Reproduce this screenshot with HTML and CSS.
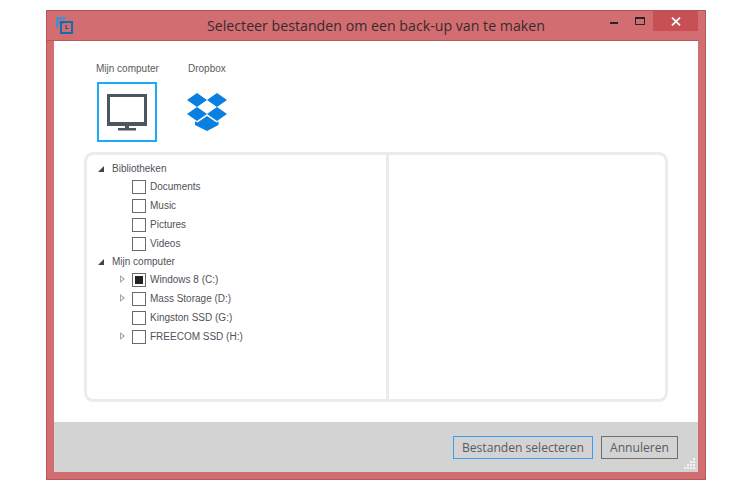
FILE: index.html
```html
<!DOCTYPE html>
<html lang="nl">
<head>
<meta charset="utf-8">
<title>Selecteer bestanden</title>
<link rel="stylesheet" href="styles.css">
</head>
<body>
<div class="window">
  <header class="titlebar">
    <svg class="app-icon" width="17" height="17" viewBox="0 0 17 17">
      <path d="M1 11V1h9" fill="none" stroke="#1b9ce0" stroke-width="1.4"/>
      <path d="M1 1h7v2H3v7H1z" fill="#1b9ce0" opacity=".5"/>
      <rect x="5" y="5" width="11" height="11" fill="none" stroke="#0d6fb0" stroke-width="2"/>
      <path d="M10 8v3.5h2.5" fill="none" stroke="#0d5f98" stroke-width="1.2"/>
      <path d="M3.500 5.500h4" stroke="#0d6fb0" stroke-width="2"/>
    </svg>
    <h1 class="title">Selecteer bestanden om een back-up van te maken</h1>
    <div class="controls">
      <span class="ctl ctl-min"><i class="min-bar"></i></span>
      <span class="ctl ctl-max"><i class="max-box"></i></span>
      <span class="ctl ctl-close">
        <svg width="10" height="9" viewBox="0 0 10 9"><path d="M1 .7l8 7.600M9 .7l-8 7.600" stroke="#fff" stroke-width="1.800" fill="none"/></svg>
      </span>
    </div>
  </header>
  <div class="client">
    <main class="content">
      <div class="sources">
        <div class="source">
          <div class="source-label">Mijn computer</div>
          <div class="tile tile-active">
            <svg width="40" height="37" viewBox="0 0 40 37">
              <rect x="1.500" y="1.500" width="37" height="29" fill="#fff" stroke="#4a5662" stroke-width="3"/>
              <path d="M0 28h40v3H0z" fill="#4a5662"/>
              <path d="M18 31h4v4h-4zM11 34h18v2.500H11z" fill="#4a5662"/>
            </svg>
          </div>
        </div>
        <div class="source">
          <div class="source-label">Dropbox</div>
          <div class="tile tile-plain">
            <svg width="40" height="38" viewBox="1 0 40 38">
              <path d="M11 0l10 7-10 7L1 7zM31 0l10 7-10 7-10-7zM11 14l10 7-10 7-10-7zM31 14l10 7-10 7-10-7z" fill="#0b7fe0"/>
              <path d="M21 23l9.500 6.500 2-1.200V32L21 38 9 32v-3.700l2.500 1.200z" fill="#0b7fe0"/>
            </svg>
          </div>
        </div>
      </div>
      <div class="panes">
        <div class="tree">
          <div class="row row-head"><i class="arrow-open"></i><span>Bibliotheken</span></div>
          <div class="row row-item"><i class="exp"></i><i class="check"></i><span>Documents</span></div>
          <div class="row row-item"><i class="exp"></i><i class="check"></i><span>Music</span></div>
          <div class="row row-item"><i class="exp"></i><i class="check"></i><span>Pictures</span></div>
          <div class="row row-item"><i class="exp"></i><i class="check"></i><span>Videos</span></div>
          <div class="row row-head"><i class="arrow-open"></i><span>Mijn computer</span></div>
          <div class="row row-item"><i class="exp exp-closed"></i><i class="check check-partial"></i><span>Windows 8 (C:)</span></div>
          <div class="row row-item"><i class="exp exp-closed"></i><i class="check"></i><span>Mass Storage (D:)</span></div>
          <div class="row row-item"><i class="exp"></i><i class="check"></i><span>Kingston SSD (G:)</span></div>
          <div class="row row-item"><i class="exp exp-closed"></i><i class="check"></i><span>FREECOM SSD (H:)</span></div>
        </div>
        <div class="detail"></div>
      </div>
    </main>
    <footer class="footer">
      <button class="btn btn-primary" type="button">Bestanden selecteren</button>
      <button class="btn" type="button">Annuleren</button>
      <svg class="grip" width="14" height="14" viewBox="0 0 14 14">
        <path d="M10 1h2v2h-2zM10 4h2v2h-2zM7 4h2v2H7zM10 7h2v2h-2zM7 7h2v2H7zM4 7h2v2H4zM10 10h2v2h-2zM7 10h2v2H7zM4 10h2v2H4zM1 10h2v2H1z" fill="#f4f4f4"/>
      </svg>
    </footer>
  </div>
</div>
</body>
</html>
```
FILE: styles.css
```css
* { box-sizing: border-box; }
html, body { margin: 0; height: 100%; background: #fff; overflow: hidden; }
body { padding: 10px 0 0 46px; font-family: "Liberation Sans", Arial, sans-serif; }

.window {
  width: 660px;
  height: 470px;
  background: #d26d72;
  border: 1px solid #b2575c;
  display: flex;
  flex-direction: column;
}

.titlebar {
  height: 30px;
  display: flex;
  align-items: flex-start;
  position: relative;
  flex: none;
  border-bottom: 1px solid #b2575c;
  margin: 0 7px 0 0;
}
.app-icon { margin: 6px 0 0 9px; flex: none; }
.title {
  margin: 6px 0 0 134px;
  font: 400 14.2px/18px "Open Sans", sans-serif;
  color: #3a2a2c;
  white-space: nowrap;
}
.controls {
  position: absolute;
  right: 0;
  top: 0;
  display: flex;
  height: 20px;
}
.ctl { display: flex; align-items: center; justify-content: center; }
.ctl-min { width: 27px; }
.ctl-max { width: 26px; }
.ctl-close { width: 45px; background: #c75054; }
.min-bar { width: 8px; height: 2px; background: #2b2224; margin-top: 4px; }
.max-box { width: 10px; height: 8px; border: 1px solid #2b2224; border-top-width: 2px; }

.client {
  margin: 0 7px 7px;
  flex: 1;
  display: flex;
  flex-direction: column;
  background: #fff;
  min-height: 0;
}
.content { flex: 1; min-height: 0; padding: 19px 30px 20px; display: flex; flex-direction: column; }

.sources { display: flex; padding-left: 13px; height: 82px; flex: none; }
.source { width: 90px; display: flex; flex-direction: column; }
.source-label {
  font-size: 10px;
  line-height: 14px;
  color: #5a5a60;
  white-space: nowrap;
  margin-left: -1px;
  padding-top: 2px;
  height: 22px;
}
.source + .source .source-label { margin-left: 1px; }
.tile {
  width: 60px;
  height: 60px;
  display: flex;
  align-items: center;
  justify-content: center;
  border: 2px solid transparent;
}
.tile-plain { justify-content: flex-start; border-left-width: 0; }
.tile-active { border-color: #1eaaf6; }

.panes {
  width: 584px;
  height: 250px;
  border: 3px solid #ebebeb;
  border-radius: 9px;
  display: flex;
  flex: none;
  margin-top: 10px;
}
.tree { width: 302px; border-right: 3px solid #ebebeb; padding-top: 5px; }
.detail { flex: 1; }

.row { display: flex; align-items: center; height: 19px; font-size: 10px; color: #50525a; white-space: nowrap; }
.row-head { height: 17px; padding-left: 11px; }
.row-head span { margin-left: 8px; }
.row-item { padding-left: 32px; }
.row-item span { margin-left: 4px; }
.arrow-open {
  width: 0; height: 0;
  border-style: solid;
  border-width: 0 0 6px 6px;
  border-color: transparent transparent #444 transparent;
  flex: none;
}
.exp { width: 13px; flex: none; height: 9px; display: block; position: relative; }
.exp-closed::before {
  content: "";
  position: absolute;
  left: 1px; top: 0;
  border-style: solid;
  border-width: 4.500px 0 4.500px 5px;
  border-color: transparent transparent transparent #a8a8a8;
}
.exp-closed::after {
  content: "";
  position: absolute;
  left: 2px; top: 2px;
  border-style: solid;
  border-width: 2.500px 0 2.500px 2.800px;
  border-color: transparent transparent transparent #fff;
}
.check {
  width: 14px; height: 14px;
  border: 1px solid #6a6a6a;
  background: #fff;
  flex: none;
  display: block;
}
.check-partial { background: #222; box-shadow: inset 0 0 0 2px #fff; }

.footer {
  height: 50px;
  flex: none;
  background: #d3d3d3;
  display: flex;
  justify-content: flex-end;
  align-items: flex-start;
  padding: 14px 20px 0 0;
  gap: 8px;
  position: relative;
}
.btn {
  height: 23px;
  padding: 0;
  width: 77px;
  background: #d3d3d3;
  border: 1px solid #6e6e6e;
  font: 12.1px/19px "Open Sans", sans-serif;
  color: #555c66;
}
.btn-primary { width: 140px; border-color: #3a9bf0; }
.grip { position: absolute; right: 1px; bottom: 1px; }
```
